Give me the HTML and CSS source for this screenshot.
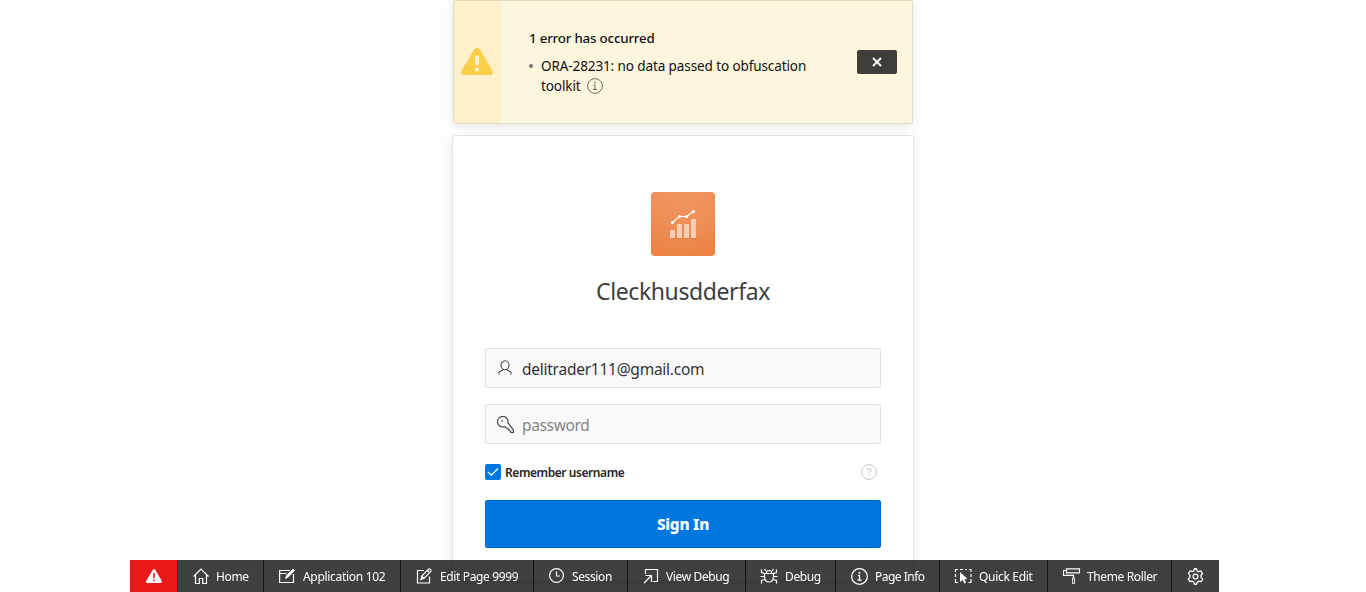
FILE: index.html
```html
<!DOCTYPE html>
<html lang="en">
<head>
<meta charset="utf-8">
<title>Cleckhusdderfax</title>
<link rel="stylesheet" href="styles.css">
</head>
<body>
<main class="page">
  <section class="alert">
    <div class="alert-icon">
      <svg width="32" height="30" viewBox="0 0 32 30"><path d="M13 2.5Q16-1.2 19 2.5L31 23Q33.500 28 28 28H4Q-1.500 28 1 23Z" fill="#fbce4a"/><path d="M16 10.500v6" stroke="#fdf0cb" stroke-width="4" stroke-linecap="round"/><circle cx="16" cy="22.500" r="2.100" fill="#fdf0cb"/></svg>
    </div>
    <div class="alert-body">
      <h2 class="alert-title">1 error has occurred</h2>
      <ul class="alert-list"><li><span class="line-one">ORA-28231: no data passed to obfuscation</span><br><span class="line-two">toolkit</span><svg class="info" width="16" height="16" viewBox="0 0 16 16" fill="none" stroke="#6f6b60"><circle cx="8" cy="8" r="7.400"/><path d="M6.500 7H8v4.500M6 11.500h4"/><path d="M7.200 4.500h1.600" stroke-width="1.500"/></svg></li></ul>
    </div>
    <button class="alert-close" aria-label="Close"><svg width="10" height="10" viewBox="0 0 10 10" stroke="#fff" stroke-width="1.900"><path d="M1 1l8 8M9 1L1 9"/></svg></button>
  </section>
  <section class="login">
    <div class="logo">
      <svg width="64" height="64" viewBox="0 0 64 64"><path d="M19 38h5v8h-5zM26 32h5v14h-5zM33 32h5v14h-5zM40 27h5v19h-5z" fill="#f8cfb6"/><path d="M19 46.500h5M26 46.500h5M33 46.500h5M40 46.500h5" stroke="#d97539" stroke-opacity=".6"/><path d="M21.500 30.500l7-6H35.500l7-5" fill="none" stroke="#fff" stroke-width="1.200"/><g fill="#fff"><circle cx="21.500" cy="30.500" r="1.600"/><circle cx="28.500" cy="24.500" r="1.600"/><circle cx="35.500" cy="24.500" r="1.600"/><circle cx="42.500" cy="19.500" r="1.600"/></g></svg>
    </div>
    <h1 class="title">Cleckhusdderfax</h1>
    <div class="field">
      <svg width="16" height="16" viewBox="0 0 16 16" fill="none" stroke="#484848" stroke-width="1.100"><ellipse cx="8" cy="5.300" rx="4" ry="4.500"/><path d="M5.700 9.200v1L2.700 11.600Q2 12 2 13v1.500M10.300 9.200v1l3 1.400q.7.400.7 1.400v1.500"/></svg>
      <span class="username">delitrader111@gmail.com</span>
    </div>
    <div class="field">
      <svg width="18" height="17" viewBox="0 0 17 16" fill="none" stroke="#484848" stroke-width="1.100"><path d="M10.300 6.500A5 5 0 1 0 6.200 10.300L8 10.200l1 1.300 1.500.2.400 1.400 1.300.4.700 1.900 2.600.1V13Z"/><circle cx="4.900" cy="4.500" r=".8" fill="#484848" stroke="none"/></svg>
      <span class="password">password</span>
    </div>
    <div class="remember">
      <span class="check"><svg width="12" height="12" viewBox="0 0 12 12" fill="none" stroke="#fff" stroke-width="1.300"><path d="M1 6l3.300 3.200L11 2.500"/></svg></span>
      <span class="remember-text">Remember username</span>
      <svg class="help" width="16" height="16" viewBox="0 0 16 16" fill="none" stroke="#c8c8c8"><circle cx="8" cy="8" r="7.400"/><path d="M6 6.300Q6.100 4.500 8 4.500t2 1.700c0 1.300-2 1.500-2 3.300" stroke-width="1.100"/><path d="M7.400 11.500h1.200" stroke-width="1.200"/></svg>
    </div>
    <button class="signin"><span>Sign In</span></button>
  </section>
</main>
<nav class="toolbar">
  <a class="tool warn"><svg width="16" height="16" viewBox="0 0 16 16"><path d="M6.800 1.800Q8 0 9.200 1.800L15.800 13Q16.500 15 14.500 15H1.500Q-.5 15 .2 13Z" fill="#fff"/><path d="M8 5v5M8 11.500v1.700" stroke="#e91919" stroke-width="1.600"/></svg></a>
  <a class="tool home"><svg width="16" height="16" viewBox="0 0 16 16"><path d="M.5 8.500L8 1l7.500 7.500M2.500 6.800v8.700h3.800V10.500h3.400v5h3.800V6.800"/></svg><span>Home</span></a>
  <a class="tool app"><svg width="16" height="16" viewBox="0 0 16 16"><path d="M11 2.500H.6v12h13.900V6M.6 5.500h7"/><path d="M6.500 10.500l1-3L14 1l1.500 1.500L9 9.300Z" fill="#fff" stroke-width=".8"/></svg><span>Application 102</span></a>
  <a class="tool edit"><svg width="16" height="16" viewBox="0 0 16 16"><path d="M8 2.500H1.500v12.500h12V8.500"/><path d="M5 11.500l.8-3.500L12.500 1.200q1-.8 2 .2t.2 2L8.200 10.200ZM11.500 2.500l2.200 2.200M6 8.500l2 2"/></svg><span>Edit Page 9999</span></a>
  <a class="tool session"><svg width="16" height="16" viewBox="0 0 16 16"><circle cx="7.500" cy="7.500" r="6.900"/><path d="M7.500 3.500V8h3.500"/></svg><span>Session</span></a>
  <a class="tool view"><svg width="16" height="16" viewBox="0 0 16 16"><path d="M2.500 6V1.500h12v12H10M1 15l7-7M2.500 7.500h6V14"/></svg><span>View Debug</span></a>
  <a class="tool debug"><svg width="18" height="16" viewBox="0 0 18 16"><path d="M4.500 5.500h9V9q-.5 5-4.500 5T4.500 9ZM6.200 5.500q0-3 2.800-3t2.800 3M4.500 5.500L1.500 4.500v-3M13.500 5.500l3-1v-3M4.500 8.500H.5M13.500 8.500h4M5 11.500l-3.500 1V15.500M13 11.500l3.500 1v3M6 3L4.500 1M12 3l1.500-2"/></svg><span>Debug</span></a>
  <a class="tool info-page"><svg width="17" height="17" viewBox="0 0 16 16"><circle cx="8" cy="8" r="7.400"/><path d="M6.500 7H8v4.500M6 11.500h4"/><path d="M7.200 4.500h1.600" stroke-width="1.500"/></svg><span>Page Info</span></a>
  <a class="tool quick"><svg width="18" height="16" viewBox="0 0 18 16"><path d="M1.500 4V1.500H4M6 1.500h3M11 1.500h2M15 1.500h2V4M1.500 6v3M1.500 11v3.500H4M17 6v3M17 11v3.500h-2.500"/><path d="M6 4l7.500 7-3.200.3 1.800 3.300-1.700.9-1.800-3.500L6 14Z" fill="#fff" stroke="none"/></svg><span>Quick Edit</span></a>
  <a class="tool theme"><svg width="17" height="16" viewBox="0 0 17 16"><path d="M3.500.8h13v4h-13zM3.500 2.500h-3v4.800h10V10"/><path d="M9.500 10h2v5.500h-2z" stroke-width=".9"/></svg><span>Theme Roller</span></a>
  <a class="tool gear"><svg width="17" height="17" viewBox="0 0 16 16"><path d="M6.500 2.700L7 .7h2l.5 2 1.300.7 2.200-.7 1.700 2.500-1.500 1.600v2l1.700 1.700-1.700 2.400-2.100-.5-1.500.9L9 15.300H7l-.6-2.100-1.500-.9-2.100.5-1.700-2.400 1.700-1.700v-2L1.200 5.200l1.800-2.500 2.200.7Z" stroke-linejoin="round"/><circle cx="8" cy="8" r="2.300"/></svg></a>
</nav>
</body>
</html>
```
FILE: styles.css
```css
* { box-sizing: border-box; }
body { margin: 0; height: 592px; overflow: hidden; background: #fdfdfd; font-family: "Noto Sans", "Open Sans", sans-serif; color: #262626; }
svg { display: block; flex: none; }
button { border: 0; padding: 0; font-family: inherit; }
span { white-space: nowrap; }
.page { display: flex; flex-direction: column; align-items: center; gap: 11px; }
.alert { width: 460px; height: 124px; display: flex; align-items: center; background: #fdf6de; border: 1px solid #e5dcc0; border-radius: 2px; box-shadow: 0 2px 10px -2px rgba(0,0,0,.14); }
.alert-icon { width: 47px; height: 100%; padding-right: 1px; background: #fdf0cb; display: flex; align-items: center; justify-content: center; }
.alert-body { width: 356px; padding: 0 0 0 28px; color: #111; }
.alert-title { margin: 0 0 8px; font-size: 13.3px; line-height: 20px; font-weight: 500; letter-spacing: -.18px; }
.alert-list { margin: 0; padding: 0; list-style: none; font-size: 13.5px; line-height: 20px; }
.alert-list li { padding-left: 12px; background: radial-gradient(circle at 2px 10px, #87837a 1.8px, transparent 2.300px) no-repeat; }
.line-one { letter-spacing: -.1px; }
.line-two { letter-spacing: -.1px; }
.info { display: inline-block; vertical-align: -3px; margin-left: 6px; }
.alert-close { width: 40px; height: 24px; border-radius: 2px; background: #403e38; display: flex; align-items: center; justify-content: center; }
.login { width: 462px; height: 446px; padding: 56px 32px 0; background: #fff; border: 1px solid #e4e4e4; border-radius: 3px; box-shadow: 0 2px 10px rgba(0,0,0,.08); display: flex; flex-direction: column; align-items: center; }
.logo { width: 64px; height: 64px; border-radius: 4px; background: radial-gradient(circle at 50% 0, #f0945e, #ee8f57 50%, #ec7f3d 100%); flex: none; }
.title { margin: 17px 0 39px; font-size: 23px; line-height: 36px; font-weight: 400; letter-spacing: -.4px; color: #404040; white-space: nowrap; }
.field { width: 396px; height: 40px; margin-bottom: 16px; padding-left: 11px; display: flex; align-items: center; border: 1px solid #dfdfdf; border-radius: 2px; background: #f9f9f9; flex: none; }
.field svg { margin-right: auto; }
.field span { width: 358px; font-size: 15.5px; line-height: 20px; padding-top: 2px; }
.username { color: #333; letter-spacing: -.25px; }
.password { color: #858585; letter-spacing: -.35px; }
.remember { width: 396px; height: 24px; padding-right: 4px; display: flex; align-items: center; gap: 4px; flex: none; }
.check { width: 16px; height: 16px; border-radius: 2px; background: #0076df; display: flex; align-items: center; justify-content: center; }
.remember-text { font-size: 12px; font-weight: 600; letter-spacing: -.43px; padding-top: 1px; }
.help { margin-left: auto; }
.signin { width: 396px; height: 48px; margin-top: 16px; padding-top: 2px; border: 1px solid #0069c7; border-radius: 2px; background: #0076df; color: #fff; font-size: 15.4px; line-height: 20px; font-weight: 800; letter-spacing: -.25px; flex: none; }
.toolbar { position: fixed; left: 130px; bottom: 0; width: 1089px; height: 32px; display: flex; background: rgba(0,0,0,.75); color: #fff; font-size: 12px; }
.tool { height: 32px; display: flex; align-items: center; gap: 8px; padding-left: 15px; border-right: 1px solid #121212; flex: none; }
.tool svg { fill: none; stroke: #fff; stroke-width: 1.200; }
.tool span { line-height: 20px; padding-top: 1px; letter-spacing: -.37px; }
.warn { width: 48px; padding-left: 16px; background: #e91919; }
.warn svg { stroke: none; }
.home { width: 86px; gap: 7px; }
.app { width: 137px; }
.app span { letter-spacing: -.3px; }
.edit { width: 133px; }
.session { width: 94px; gap: 7px; }
.view { width: 118px; gap: 7px; }
.debug { width: 90px; gap: 7px; padding-left: 14px; }
.info-page { width: 104px; gap: 7px; }
.info-page span { letter-spacing: -.5px; }
.quick { width: 108px; gap: 7px; padding-left: 14px; }
.quick span { letter-spacing: -.3px; }
.theme { width: 124px; gap: 7px; }
.gear { width: 47px; border-right: 0; }
```
